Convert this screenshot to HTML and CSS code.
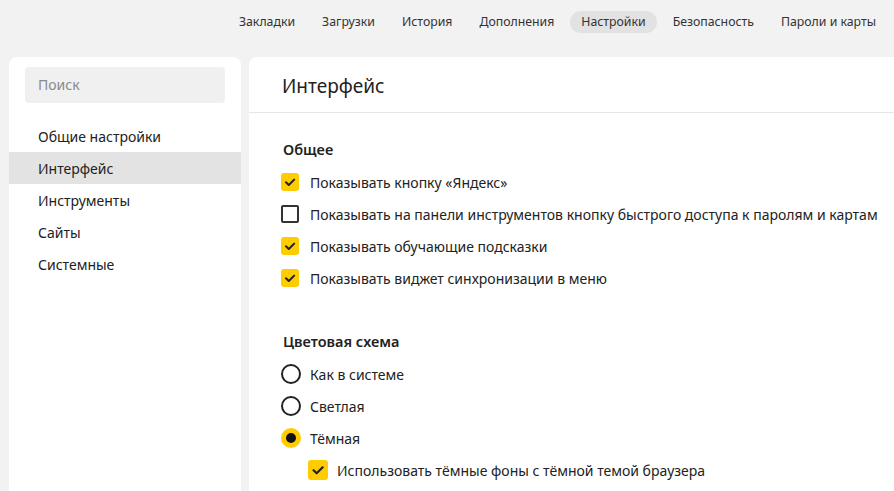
FILE: index.html
```html
<!DOCTYPE html>
<html lang="ru">
<head>
<meta charset="utf-8">
<link rel="stylesheet" href="styles.css">
</head>
<body>
<nav class="topnav">
  <a class="tab">Закладки</a>
  <a class="tab">Загрузки</a>
  <a class="tab">История</a>
  <a class="tab">Дополнения</a>
  <a class="tab active">Настройки</a>
  <a class="tab">Безопасность</a>
  <a class="tab">Пароли и карты</a>
</nav>
<div class="layout">
  <aside class="sidebar">
    <div class="search">Поиск</div>
    <ul class="menu">
      <li>Общие настройки</li>
      <li class="selected">Интерфейс</li>
      <li>Инструменты</li>
      <li>Сайты</li>
      <li>Системные</li>
    </ul>
  </aside>
  <main class="content">
    <h1 class="title">Интерфейс</h1>
    <section class="section">
      <h2 class="section-title">Общее</h2>
      <label class="row"><span class="cb checked"><svg viewBox="0 0 18 18"><path d="M5 9.2l2.8 2.8L13.2 6.6" /></svg></span>Показывать кнопку «Яндекс»</label>
      <label class="row"><span class="cb"></span>Показывать на панели инструментов кнопку быстрого доступа к паролям и картам</label>
      <label class="row"><span class="cb checked"><svg viewBox="0 0 18 18"><path d="M5 9.2l2.8 2.8L13.2 6.6" /></svg></span>Показывать обучающие подсказки</label>
      <label class="row"><span class="cb checked"><svg viewBox="0 0 18 18"><path d="M5 9.2l2.8 2.8L13.2 6.6" /></svg></span>Показывать виджет синхронизации в меню</label>
    </section>
    <section class="section section-2">
      <h2 class="section-title">Цветовая схема</h2>
      <label class="row"><span class="radio"></span>Как в системе</label>
      <label class="row"><span class="radio"></span>Светлая</label>
      <label class="row"><span class="radio on"></span>Тёмная</label>
      <label class="row nested"><span class="cb checked"><svg viewBox="0 0 18 18"><path d="M5 9.2l2.8 2.8L13.2 6.6" /></svg></span>Использовать тёмные фоны с тёмной темой браузера</label>
    </section>
  </main>
</div>
</body>
</html>
```
FILE: styles.css
```css
* { box-sizing: border-box; }
html, body { margin: 0; padding: 0; }
body {
  background: #f2f2f2;
  font-family: "Noto Sans", "Open Sans", sans-serif;
  color: #1f1f1f;
  width: 894px;
  height: 491px;
  overflow: hidden;
}
.topnav {
  display: flex;
  justify-content: flex-end;
  align-items: center;
  gap: 5px;
  height: 44px;
  padding-right: 7px;
  font-size: 12.3px;
}
.tab {
  color: #333;
  padding: 3px 11px;
  border-radius: 11px;
  line-height: 16px;
}
.tab.active { background: #e2e2e2; }
.layout {
  display: flex;
  gap: 8px;
  padding-left: 9px;
  margin-top: 13px;
}
.sidebar {
  width: 232px;
  height: 440px;
  background: #fff;
  border-radius: 8px 8px 0 0;
  padding-top: 10px;
}
.search {
  margin: 0 16px;
  height: 36px;
  background: #f0f0f0;
  border-radius: 4px;
  color: #8a8a8a;
  font-size: 14px;
  line-height: 36px;
  padding-left: 13px;
}
.menu {
  list-style: none;
  margin: 17px 0 0;
  padding: 0;
}
.menu li {
  height: 32px;
  line-height: 33px;
  padding-left: 29px;
  font-size: 14px;
  color: #222;
}
.menu li.selected { background: #e3e3e3; }
.content {
  flex: 1;
  height: 440px;
  background: #fff;
  border-radius: 8px 0 0 0;
}
.title {
  margin: 0;
  height: 56px;
  line-height: 58px;
  padding-left: 33px;
  font-size: 19px;
  font-weight: normal;
  border-bottom: 1px solid #e6e6e6;
  color: #222;
}
.section { padding-left: 32px; padding-top: 25px; }
.section-2 { padding-top: 36px; }
.section-title {
  margin: 0 0 6px 2px;
  font-size: 14.5px;
  font-weight: 600;
  line-height: 22px;
  color: #222;
}
.row {
  display: flex;
  align-items: center;
  height: 32px;
  font-size: 14px;
  color: #222;
  white-space: nowrap;
}
.cb {
  width: 18px;
  height: 18px;
  border: 2px solid #333;
  border-radius: 2px;
  margin-right: 11px;
  flex: none;
  display: flex;
}
.cb.checked {
  border: none;
  background: #ffcc00;
  border-radius: 3px;
}
.cb svg { width: 18px; height: 18px; }
.cb path { fill: none; stroke: #222; stroke-width: 2; stroke-linecap: round; stroke-linejoin: round; }
.radio {
  width: 20px;
  height: 20px;
  border: 2px solid #222;
  border-radius: 50%;
  margin-right: 9px;
  flex: none;
}
.radio.on {
  border: 5px solid #ffcc00;
  background: #111;
}
.nested { padding-left: 27px; }
.nested .cb { width: 20px; height: 20px; margin-right: 9px; }
.nested .cb svg { width: 20px; height: 20px; }
```
